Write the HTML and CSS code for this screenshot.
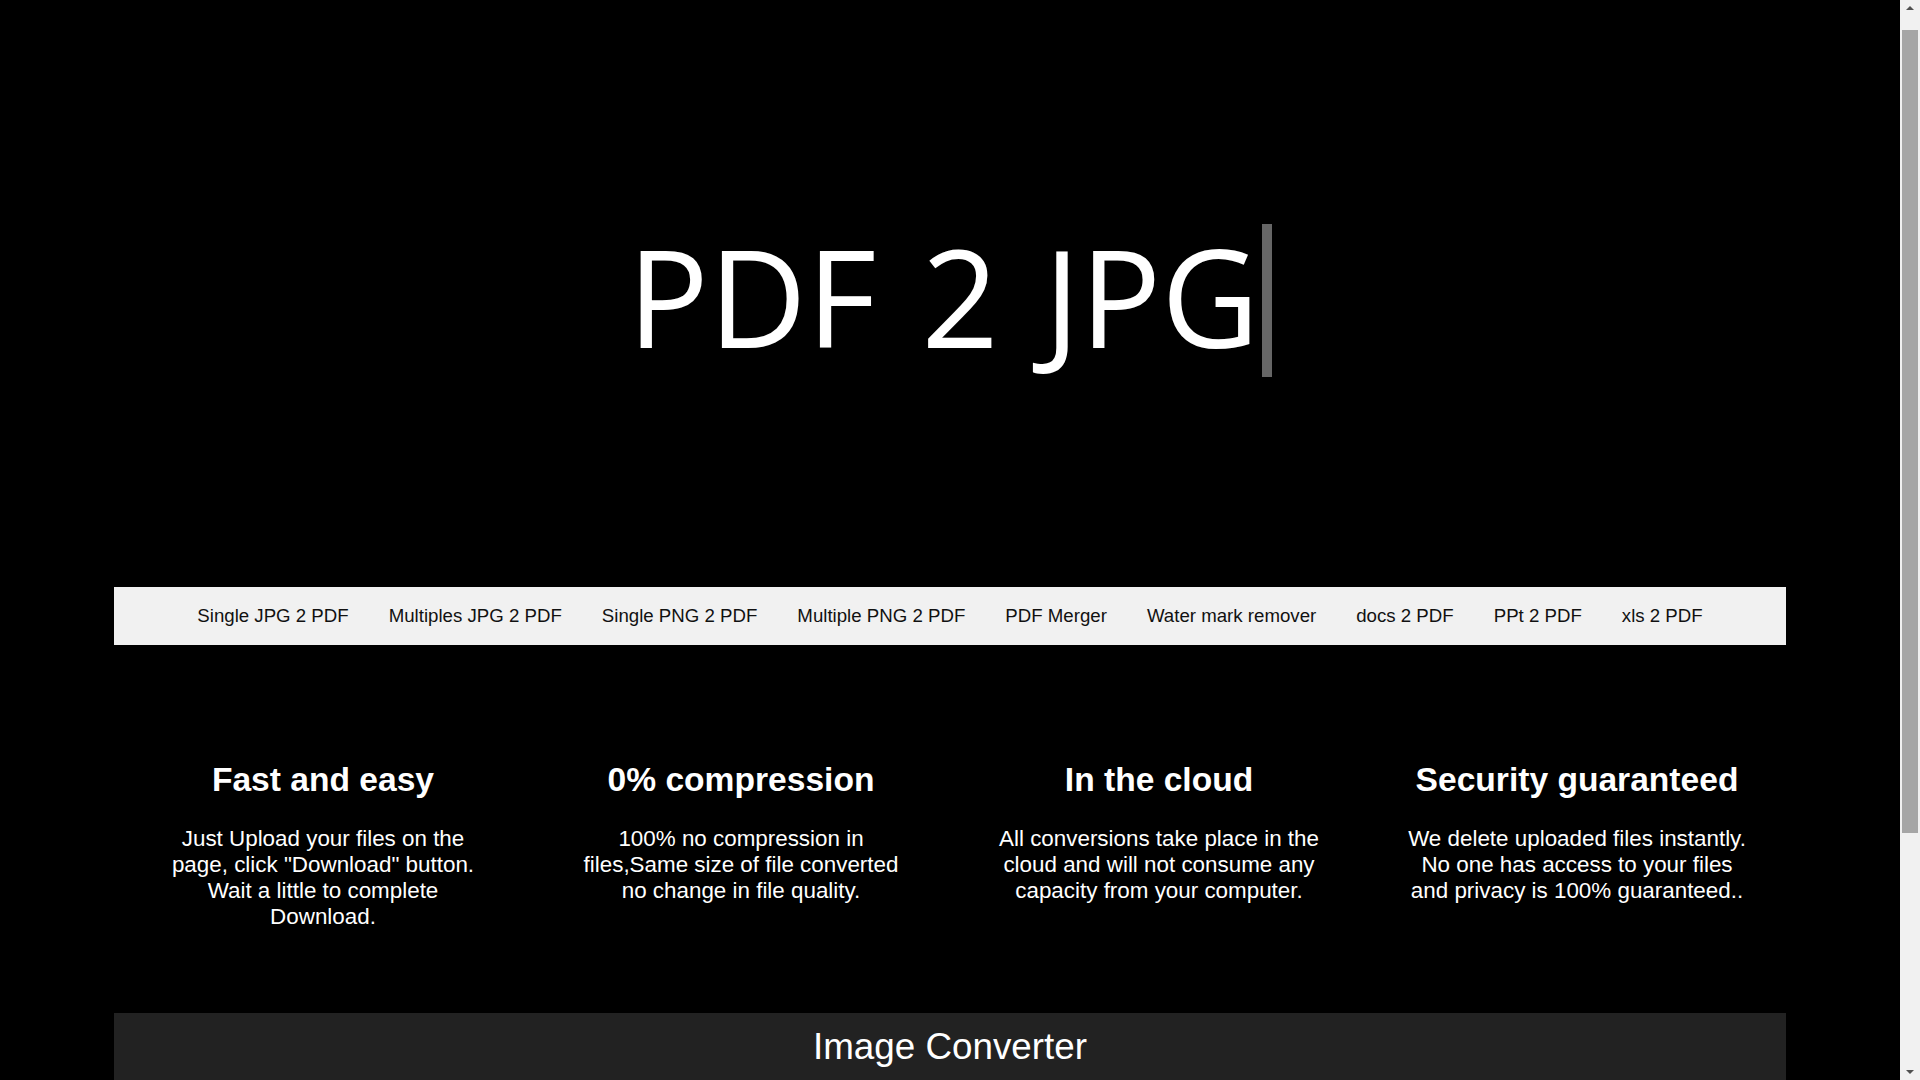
FILE: index.html
```html
<!DOCTYPE html>
<html lang="en">
<head>
<meta charset="utf-8">
<title>PDF 2 JPG</title>
<link rel="stylesheet" href="styles.css">
</head>
<body>
<header class="hero">
  <h1 class="type">PDF 2 JPG</h1>
</header>

<nav class="tools">
  <a href="#">Single JPG 2 PDF</a>
  <a href="#">Multiples JPG 2 PDF</a>
  <a href="#">Single PNG 2 PDF</a>
  <a href="#">Multiple PNG 2 PDF</a>
  <a href="#">PDF Merger</a>
  <a href="#">Water mark remover</a>
  <a href="#">docs 2 PDF</a>
  <a href="#">PPt 2 PDF</a>
  <a href="#">xls 2 PDF</a>
</nav>

<section class="features">
  <div class="feature">
    <h2>Fast and easy</h2>
    <p>Just Upload your files on the page, click "Download" button. Wait a little to complete Download.</p>
  </div>
  <div class="feature">
    <h2>0% compression</h2>
    <p>100% no compression in files,Same size of file converted no change in file quality.</p>
  </div>
  <div class="feature">
    <h2>In the cloud</h2>
    <p>All conversions take place in the cloud and will not consume any capacity from your computer.</p>
  </div>
  <div class="feature">
    <h2>Security guaranteed</h2>
    <p>We delete uploaded files instantly. No one has access to your files and privacy is 100% guaranteed..</p>
  </div>
</section>

<section class="converter">
  <h2 class="converter-title">Image Converter</h2>
</section>

<div class="scrollbar" aria-hidden="true">
  <span class="arrow arrow-up"></span>
  <span class="thumb"></span>
  <span class="arrow arrow-down"></span>
</div>
</body>
</html>
```

FILE: styles.css
```css
html, body {
  margin: 0;
  padding: 0;
  background: #000;
}

html {
  overflow: hidden;
}

body {
  font-family: "Liberation Sans", Arial, sans-serif;
  color: #fff;
  padding-right: 20px;
}

/* classic browser scrollbar seen in the screenshot */
.scrollbar {
  position: fixed;
  top: 0;
  right: 0;
  bottom: 0;
  width: 20px;
  background: #f1f1f1;
  display: flex;
  flex-direction: column;
  align-items: center;
  padding: 6px 0;
  box-sizing: border-box;
}

.arrow {
  width: 0;
  height: 0;
  border-left: 4.5px solid transparent;
  border-right: 4.5px solid transparent;
}

.arrow-up {
  border-bottom: 4px solid #505050;
}

.arrow-down {
  margin-top: auto;
  border-top: 4px solid #505050;
}

.thumb {
  display: block;
  width: 16px;
  height: 803px;
  margin-top: 20px;
  background: #a6a6a6;
}

.hero {
  display: flex;
  justify-content: center;
  padding: 224px 0 210px;
}

.type {
  margin: 0;
  display: inline-block;
  font-family: "Open Sans", "Noto Sans", sans-serif;
  font-weight: 400;
  font-size: 135px;
  line-height: 144px;
  word-spacing: 10px;
  padding: 0 3px 9px 0;
  border-right: 10px solid #666;
  color: #fff;
  white-space: nowrap;
}

.tools {
  width: 88%;
  margin: 0 auto;
  background: #f1f1f1;
  display: flex;
  justify-content: center;
  padding: 18px 0;
}

.tools a {
  font-size: 18.67px;
  line-height: 22px;
  padding: 0 20px;
  color: #111;
  text-decoration: none;
  white-space: nowrap;
}

.features {
  width: 88%;
  margin: 0 auto;
  display: grid;
  grid-template-columns: repeat(4, 1fr);
  padding: 116px 0 61px;
}

.feature {
  padding: 0 20px;
  text-align: center;
  font-size: 22.4px;
}

.feature h2 {
  font-size: 33.6px;
  font-weight: 700;
  margin: 0 0 27px;
  line-height: normal;
}

.feature p {
  max-width: 342px;
  margin: 0 auto 22px;
  line-height: normal;
}

.converter {
  width: 88%;
  margin: 0 auto;
  background: #222;
  min-height: 383px;
  padding-top: 13px;
}

.converter-title {
  margin: 0;
  text-align: center;
  font-size: 36.8px;
  font-weight: 400;
  line-height: normal;
}
```
